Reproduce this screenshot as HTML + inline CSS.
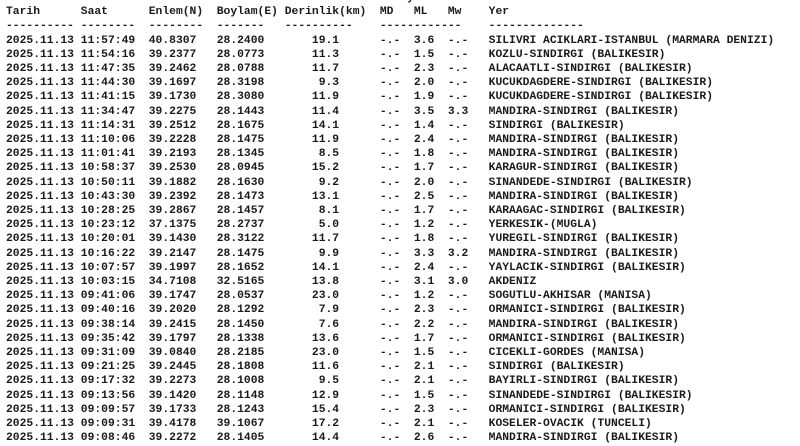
<!DOCTYPE html>
<html><head><meta charset="utf-8"><style>
html,body{margin:0;padding:0;background:#fff;width:800px;height:446px;overflow:hidden}
pre{margin:-9px 0 0 6px;font-family:"Liberation Mono","DejaVu Sans Mono",monospace;font-size:11.33px;line-height:14.2px;color:#1a1a1a;font-weight:bold;letter-spacing:0}
</style></head><body><pre>                                                         Büyüklük
Tarih      Saat      Enlem(N)  Boylam(E) Derinlik(km)  MD   ML   Mw    Yer
---------- --------  --------  -------   ----------    ------------    --------------
2025.11.13 11:57:49  40.8307   28.2400       19.1      -.-  3.6  -.-   SILIVRI ACIKLARI-ISTANBUL (MARMARA DENIZI)
2025.11.13 11:54:16  39.2377   28.0773       11.3      -.-  1.5  -.-   KOZLU-SINDIRGI (BALIKESIR)
2025.11.13 11:47:35  39.2462   28.0788       11.7      -.-  2.3  -.-   ALACAATLI-SINDIRGI (BALIKESIR)
2025.11.13 11:44:30  39.1697   28.3198        9.3      -.-  2.0  -.-   KUCUKDAGDERE-SINDIRGI (BALIKESIR)
2025.11.13 11:41:15  39.1730   28.3080       11.9      -.-  1.9  -.-   KUCUKDAGDERE-SINDIRGI (BALIKESIR)
2025.11.13 11:34:47  39.2275   28.1443       11.4      -.-  3.5  3.3   MANDIRA-SINDIRGI (BALIKESIR)
2025.11.13 11:14:31  39.2512   28.1675       14.1      -.-  1.4  -.-   SINDIRGI (BALIKESIR)
2025.11.13 11:10:06  39.2228   28.1475       11.9      -.-  2.4  -.-   MANDIRA-SINDIRGI (BALIKESIR)
2025.11.13 11:01:41  39.2193   28.1345        8.5      -.-  1.8  -.-   MANDIRA-SINDIRGI (BALIKESIR)
2025.11.13 10:58:37  39.2530   28.0945       15.2      -.-  1.7  -.-   KARAGUR-SINDIRGI (BALIKESIR)
2025.11.13 10:50:11  39.1882   28.1630        9.2      -.-  2.0  -.-   SINANDEDE-SINDIRGI (BALIKESIR)
2025.11.13 10:43:30  39.2392   28.1473       13.1      -.-  2.5  -.-   MANDIRA-SINDIRGI (BALIKESIR)
2025.11.13 10:28:25  39.2867   28.1457        8.1      -.-  1.7  -.-   KARAAGAC-SINDIRGI (BALIKESIR)
2025.11.13 10:23:12  37.1375   28.2737        5.0      -.-  1.2  -.-   YERKESIK-(MUGLA)
2025.11.13 10:20:01  39.1430   28.3122       11.7      -.-  1.8  -.-   YUREGIL-SINDIRGI (BALIKESIR)
2025.11.13 10:16:22  39.2147   28.1475        9.9      -.-  3.3  3.2   MANDIRA-SINDIRGI (BALIKESIR)
2025.11.13 10:07:57  39.1997   28.1652       14.1      -.-  2.4  -.-   YAYLACIK-SINDIRGI (BALIKESIR)
2025.11.13 10:03:15  34.7108   32.5165       13.8      -.-  3.1  3.0   AKDENIZ
2025.11.13 09:41:06  39.1747   28.0537       23.0      -.-  1.2  -.-   SOGUTLU-AKHISAR (MANISA)
2025.11.13 09:40:16  39.2020   28.1292        7.9      -.-  2.3  -.-   ORMANICI-SINDIRGI (BALIKESIR)
2025.11.13 09:38:14  39.2415   28.1450        7.6      -.-  2.2  -.-   MANDIRA-SINDIRGI (BALIKESIR)
2025.11.13 09:35:42  39.1797   28.1338       13.6      -.-  1.7  -.-   ORMANICI-SINDIRGI (BALIKESIR)
2025.11.13 09:31:09  39.0840   28.2185       23.0      -.-  1.5  -.-   CICEKLI-GORDES (MANISA)
2025.11.13 09:21:25  39.2445   28.1808       11.6      -.-  2.1  -.-   SINDIRGI (BALIKESIR)
2025.11.13 09:17:32  39.2273   28.1008        9.5      -.-  2.1  -.-   BAYIRLI-SINDIRGI (BALIKESIR)
2025.11.13 09:13:56  39.1420   28.1148       12.9      -.-  1.5  -.-   SINANDEDE-SINDIRGI (BALIKESIR)
2025.11.13 09:09:57  39.1733   28.1243       15.4      -.-  2.3  -.-   ORMANICI-SINDIRGI (BALIKESIR)
2025.11.13 09:09:31  39.4178   39.1067       17.2      -.-  2.1  -.-   KOSELER-OVACIK (TUNCELI)
2025.11.13 09:08:46  39.2272   28.1405       14.4      -.-  2.6  -.-   MANDIRA-SINDIRGI (BALIKESIR)
</pre></body></html>
